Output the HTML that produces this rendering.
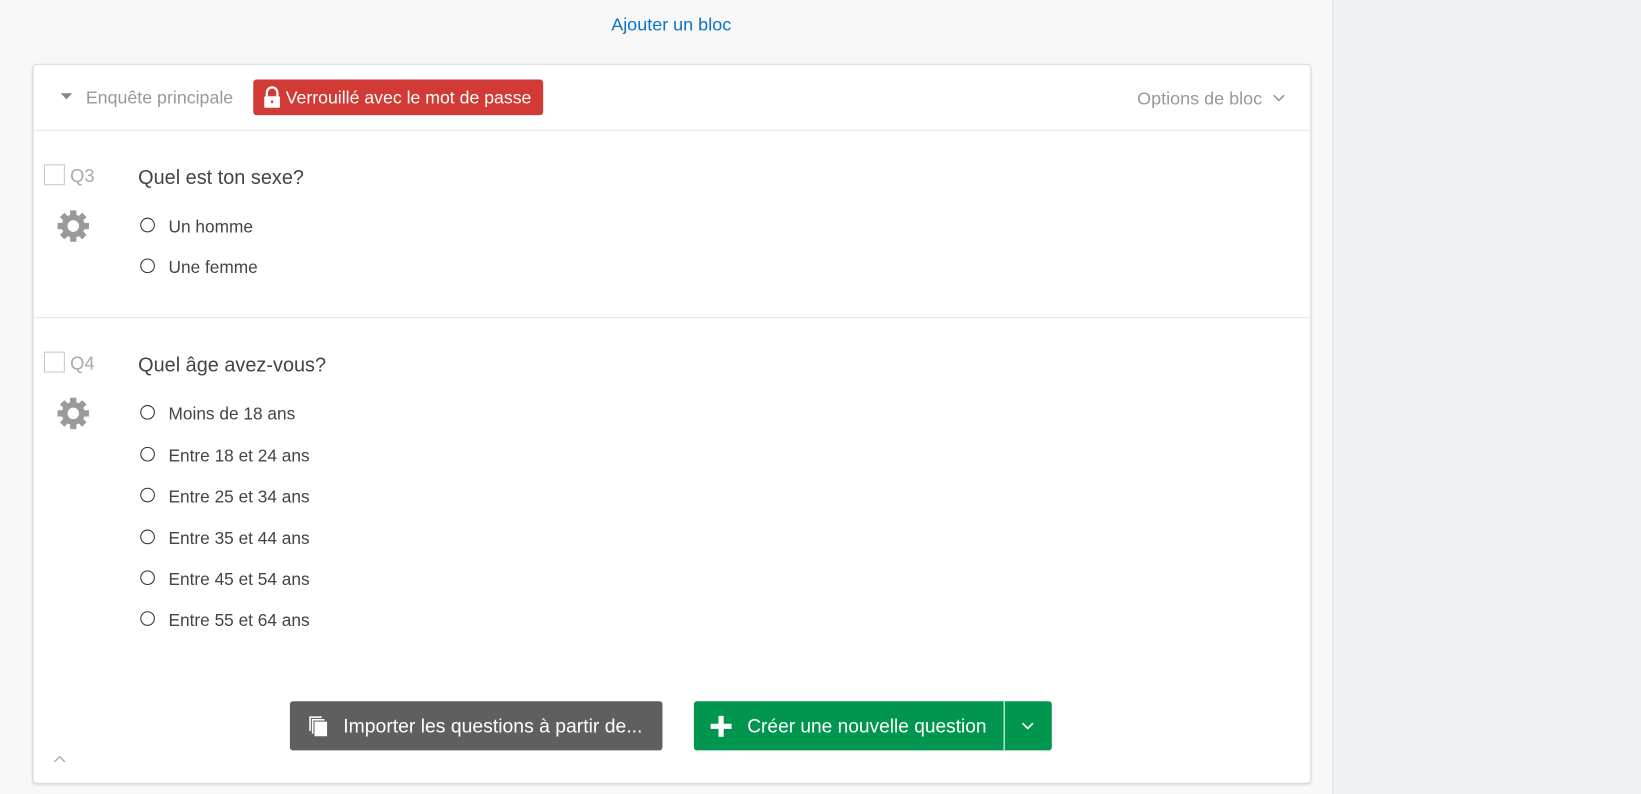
<!DOCTYPE html>
<html><head><meta charset="utf-8"><style>
html,body{margin:0;padding:0;width:1641px;height:794px;overflow:hidden;background:#f8f8f8;font-family:"Liberation Sans",Arial,sans-serif;}
#w{position:absolute;left:0;top:0;width:1568px;height:759px;transform:scale(1.04656);transform-origin:0 0;}
.a{position:absolute;}
#right{left:1273px;top:0;width:295px;height:759px;background:#eff2f5;border-left:1px solid #dcdcdc;}
#card{left:31px;top:61px;width:1220px;height:686px;background:#fff;border:1px solid #dadada;border-radius:4px;box-shadow:0 1px 2px rgba(0,0,0,.12);}
.t{position:absolute;white-space:nowrap;}
.hr{position:absolute;left:0;width:1220px;height:1px;background:#e2e2e2;}
.cb{position:absolute;width:18px;height:18px;border:1px solid #c8c8c8;background:#fff;}
.q{color:#aaa;font-size:17.5px;}
.qt{color:#444;font-size:19px;}
.r{position:absolute;width:12px;height:12px;border:1px solid #333;border-radius:50%;}
.ot{color:#444;font-size:16.5px;}
</style></head><body><div id="w">
<div class="a" id="right"></div>
<div class="t" style="left:584px;top:13px;color:#0b74c4;font-size:17.2px;">Ajouter un bloc</div>
<div class="a" id="card">
 <svg class="a" style="left:26px;top:27px" width="12" height="8"><path d="M0 0H11L5.5 6Z" fill="#888"/></svg>
 <div class="t" style="left:50px;top:22px;color:#999;font-size:17px;">Enquête principale</div>
 <div class="a" style="left:210px;top:14px;width:277px;height:34px;background:#d13a35;border-radius:3px;"></div>
 <svg class="a" style="left:219px;top:20px" width="18" height="22"><path d="M4 10V6.5a5 5 0 0 1 10 0V10" stroke="#fff" stroke-width="2.2" fill="none"/><rect x="1.5" y="10" width="15" height="11" rx="1" fill="#fff"/><rect x="8" y="14" width="2" height="2.5" fill="#d13a35"/></svg>
 <div class="t" style="left:241px;top:22px;color:#fff;font-size:16.9px;">Verrouillé avec le mot de passe</div>
 <div class="t" style="right:46px;top:22px;color:#999;font-size:17.2px;">Options de bloc</div>
 <svg class="a" style="left:1184px;top:28px" width="12" height="8"><path d="M1 1L6 6L11 1" stroke="#999" stroke-width="1.5" fill="none"/></svg>
 <div class="hr" style="top:62px"></div>

 <div class="cb" style="left:10px;top:95px"></div>
 <div class="t q" style="left:35px;top:96px">Q3</div>
 <svg class="a" style="left:22px;top:138px" width="32" height="32" viewBox="0 0 32 32"><g fill="#9a9a9a"><circle cx="16" cy="16" r="11"/><g id="tt"><rect x="13" y="1" width="6" height="7"/><rect x="13" y="24" width="6" height="7"/><rect x="1" y="13" width="7" height="6"/><rect x="24" y="13" width="7" height="6"/></g><use href="#tt" transform="rotate(45 16 16)"/></g><circle cx="16" cy="16" r="5.5" fill="#fff"/></svg>
 <div class="t qt" style="left:100px;top:98px">Quel est ton sexe?</div>
 <div class="r" style="left:102px;top:146px"></div><div class="t ot" style="left:129px;top:146px">Un homme</div>
 <div class="r" style="left:102px;top:185px"></div><div class="t ot" style="left:129px;top:185px">Une femme</div>
 <div class="hr" style="top:241px"></div>

 <div class="cb" style="left:10px;top:274px"></div>
 <div class="t q" style="left:35px;top:275px">Q4</div>
 <svg class="a" style="left:22px;top:317px" width="32" height="32" viewBox="0 0 32 32"><g fill="#9a9a9a"><circle cx="16" cy="16" r="11"/><g id="t2"><rect x="13" y="1" width="6" height="7"/><rect x="13" y="24" width="6" height="7"/><rect x="1" y="13" width="7" height="6"/><rect x="24" y="13" width="7" height="6"/></g><use href="#t2" transform="rotate(45 16 16)"/></g><circle cx="16" cy="16" r="5.5" fill="#fff"/></svg>
 <div class="t qt" style="left:100px;top:277px">Quel âge avez-vous?</div>
 <div class="r" style="left:102px;top:325px"></div><div class="t ot" style="left:129px;top:325px">Moins de 18 ans</div>
 <div class="r" style="left:102px;top:365px"></div><div class="t ot" style="left:129px;top:365px">Entre 18 et 24 ans</div>
 <div class="r" style="left:102px;top:404px"></div><div class="t ot" style="left:129px;top:404px">Entre 25 et 34 ans</div>
 <div class="r" style="left:102px;top:444px"></div><div class="t ot" style="left:129px;top:444px">Entre 35 et 44 ans</div>
 <div class="r" style="left:102px;top:483px"></div><div class="t ot" style="left:129px;top:483px">Entre 45 et 54 ans</div>
 <div class="r" style="left:102px;top:522px"></div><div class="t ot" style="left:129px;top:522px">Entre 55 et 64 ans</div>

 <div class="a" style="left:245px;top:608px;width:356px;height:47px;background:#5f5f5f;border-radius:3px;"></div>
 <svg class="a" style="left:262px;top:621px" width="22" height="22"><rect x="1" y="1" width="13" height="15" fill="#fff" stroke="#5f5f5f"/><rect x="3.5" y="3.5" width="13" height="15" fill="#fff" stroke="#5f5f5f"/><rect x="6" y="6" width="13" height="15" fill="#fff" stroke="#5f5f5f"/></svg>
 <div class="t" style="left:296px;top:621px;color:#fff;font-size:18.5px;">Importer les questions à partir de...</div>
 <div class="a" style="left:631px;top:608px;width:342px;height:47px;background:#00964f;border-radius:3px;"></div>
 <div class="a" style="left:927px;top:608px;width:1px;height:47px;background:#fff;"></div>
 <svg class="a" style="left:646px;top:621px" width="22" height="22"><path d="M11 1V21M1 11H21" stroke="#fff" stroke-width="5"/></svg>
 <div class="t" style="left:682px;top:621px;color:#fff;font-size:18.3px;">Créer une nouvelle question</div>
 <svg class="a" style="left:944px;top:628px" width="12" height="8"><path d="M1 1L6 6L11 1" stroke="#fff" stroke-width="1.6" fill="none"/></svg>
 <svg class="a" style="left:19px;top:660px" width="12" height="8"><path d="M1 6L6 1L11 6" stroke="#aaa" stroke-width="1.3" fill="none"/></svg>
</div>
</div></body></html>
